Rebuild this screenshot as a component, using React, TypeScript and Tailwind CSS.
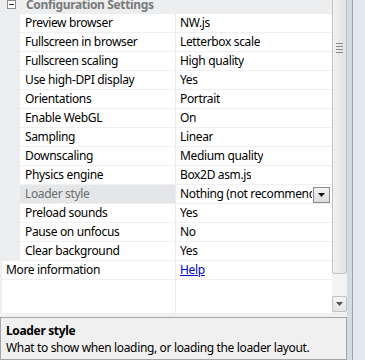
import React from "react";

type Row = { label: string; value: string; selected?: boolean };

const rows: Row[] = [
  { label: "Preview browser", value: "NW.js" },
  { label: "Fullscreen in browser", value: "Letterbox scale" },
  { label: "Fullscreen scaling", value: "High quality" },
  { label: "Use high-DPI display", value: "Yes" },
  { label: "Orientations", value: "Portrait" },
  { label: "Enable WebGL", value: "On" },
  { label: "Sampling", value: "Linear" },
  { label: "Downscaling", value: "Medium quality" },
  { label: "Physics engine", value: "Box2D asm.js" },
  { label: "Loader style", value: "Nothing (not recommended)", selected: true },
  { label: "Preload sounds", value: "Yes" },
  { label: "Pause on unfocus", value: "No" },
  { label: "Clear background", value: "Yes" },
];

function DropButton() {
  return (
    <div className="absolute right-[2px] top-[2px] w-[17px] h-[16px] border border-[#8a8a8a] bg-gradient-to-b from-[#f4f4f4] to-[#dcdcdc] flex items-center justify-center">
      <svg width="7" height="4" viewBox="0 0 7 4">
        <path d="M0 0h7L3.5 4z" fill="#111" />
      </svg>
    </div>
  );
}

export default function App() {
  return (
    <div
      className="w-[365px] h-[360px] overflow-hidden bg-[#f0f0f0] flex text-[12px] tracking-[-0.35px] text-black"
      style={{ fontFamily: '"Noto Sans", "Open Sans", sans-serif' }}
    >
      <div className="w-[347px] flex flex-col">
        {/* grid + scrollbar */}
        <div className="h-[313px] flex overflow-hidden">
          <div className="w-[332px] bg-white flex flex-col overflow-hidden">
            <div className="h-[19px] mt-[-5px] shrink-0 bg-[#eceef0] flex items-center">
              <div className="w-[20px] flex justify-center pl-[3px]">
                <div className="w-[9px] h-[9px] border border-[#8c8c8c] bg-white flex items-center justify-center">
                  <div className="w-[5px] h-px bg-[#333]" />
                </div>
              </div>
              <span className="pl-[6px] font-bold text-[#7a7a7a] leading-none">Configuration Settings</span>
            </div>
            {rows.map((r) => (
              <div key={r.label} className="h-[19px] shrink-0 flex">
                <div className="w-[20px] bg-[#eceef0]" />
                <div
                  className={`w-[155px] pl-[5px] flex items-center border-b border-[#f0f0f0] whitespace-nowrap overflow-hidden ${
                    r.selected ? "bg-[#e4e6e8] text-[#6d6d6d] border-[#e4e6e8]" : ""
                  }`}
                >
                  {r.label}
                </div>
                <div className="w-px bg-[#ebebeb]" />
                <div
                  className={`flex-1 min-w-0 relative pl-[4px] flex items-center border-b border-[#f0f0f0] whitespace-nowrap ${
                    r.selected ? "pr-[20px]" : ""
                  }`}
                >
                  <span className="block overflow-hidden">{r.value}</span>
                  {r.selected && <DropButton />}
                </div>
              </div>
            ))}
            <div className="h-[19px] shrink-0 flex">
              <div className="w-[2px] bg-[#eceef0]" />
              <div className="w-[173px] pl-[4px] flex items-center border-b border-[#f0f0f0]">More information</div>
              <div className="w-px bg-[#ebebeb]" />
              <div className="flex-1 pl-[4px] flex items-center border-b border-[#f0f0f0]">
                <span className="text-[#0000cc] underline">Help</span>
              </div>
            </div>
            <div className="flex-1 flex">
              <div className="w-[2px] bg-[#eceef0]" />
              <div className="w-[173px]" />
              <div className="w-px bg-[#ebebeb]" />
              <div className="flex-1" />
            </div>
          </div>
          {/* scrollbar */}
          <div className="w-[15px] bg-[#f3f3f3] flex flex-col">
            <div className="h-[278px] mt-[-4px] border border-[#c2c2c2] rounded-[2px] bg-gradient-to-r from-[#f2f2f2] to-[#e2e2e2] flex justify-center">
              <div className="mt-[46px] flex flex-col gap-[2px]">
                <div className="w-[7px] h-px bg-[#8a8a8a]" />
                <div className="w-[7px] h-px bg-[#8a8a8a]" />
                <div className="w-[7px] h-px bg-[#8a8a8a]" />
                <div className="w-[7px] h-px bg-[#8a8a8a]" />
              </div>
            </div>
            <div className="flex-1" />
            <div className="h-[16px] mb-[1px] border border-[#c2c2c2] rounded-[2px] bg-gradient-to-b from-[#f4f4f4] to-[#e4e4e4] flex items-center justify-center">
              <svg width="7" height="4" viewBox="0 0 7 4">
                <path d="M0 0h7L3.5 4z" fill="#555" />
              </svg>
            </div>
          </div>
        </div>
        <div className="h-[4px]" />
        {/* description panel */}
        <div className="flex-1 border border-[#a5a5a5] bg-[#f0f0f0] pl-[5px] pt-[4px] leading-[17px]">
          <div className="font-bold">Loader style</div>
          <div>What to show when loading, or loading the loader layout.</div>
        </div>
      </div>
      <div className="w-[5px] bg-[#d6dbe0]" />
      <div className="w-px bg-[#9aa5b1]" />
      <div className="flex-1 bg-[#e3e8ee]" />
    </div>
  );
}
